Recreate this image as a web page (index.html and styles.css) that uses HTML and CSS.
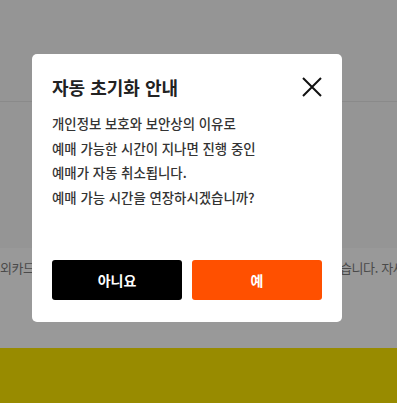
FILE: index.html
```html
<!DOCTYPE html>
<html lang="ko">
<head>
    <meta charset="UTF-8">
    <meta name="viewport" content="width=device-width, initial-scale=1.0">
    <title>자동 초기화 안내</title>
    <link rel="stylesheet" href="styles.css">
</head>
<body>
    <div class="page">
        <header class="top-bar"></header>
        <section class="content"></section>
        <div class="notice">
            <span class="notice-left">외카드</span>
            <span class="notice-right">습니다. 자세히</span>
        </div>
        <footer class="bottom-bar"></footer>
    </div>

    <div class="modal">
        <div class="modal-head">
            <h2 class="modal-title">자동 초기화 안내</h2>
            <button class="close-btn" aria-label="닫기">
                <svg width="20" height="20" viewBox="0 0 20 20">
                    <path d="M1 1 L19 19 M19 1 L1 19" stroke="#111" stroke-width="2" fill="none"/>
                </svg>
            </button>
        </div>
        <p class="modal-text">
            개인정보 보호와 보안상의 이유로<br>
            예매 가능한 시간이 지나면 진행 중인<br>
            예매가 자동 취소됩니다.<br>
            예매 가능 시간을 연장하시겠습니까?
        </p>
        <div class="modal-actions">
            <button class="btn btn-no">아니요</button>
            <button class="btn btn-yes">예</button>
        </div>
    </div>
</body>
</html>
```

FILE: styles.css
```css
* {
    margin: 0;
    padding: 0;
    box-sizing: border-box;
}

body {
    font-family: 'Noto Sans CJK KR', 'Noto Sans', sans-serif;
    background: #959595;
    overflow: hidden;
}

.page {
    display: flex;
    flex-direction: column;
    height: 403px;
}

.top-bar {
    height: 102px;
    border-bottom: 1px solid #8a8a8a;
}

.content {
    height: 146px;
}

.notice {
    display: flex;
    height: 100px;
    padding-top: 10px;
    background: #999;
    font-size: 13px;
    color: #4a4a4a;
    white-space: nowrap;
    overflow: hidden;
    letter-spacing: -0.4px;
}

.notice-left {
    flex: 0 0 340px;
}

.notice-right {
    flex: 0 0 auto;
}

.bottom-bar {
    flex: 1;
    background: #988b00;
}

.modal {
    position: absolute;
    left: 32px;
    top: 54px;
    width: 310px;
    height: 268px;
    background: #fff;
    border-radius: 5px;
    padding: 21px 20px 20px 20px;
}

.modal-head {
    display: flex;
    justify-content: space-between;
    align-items: center;
    height: 24px;
}

.modal-title {
    font-size: 18px;
    font-weight: 700;
    color: #222;
}

.close-btn {
    background: none;
    border: none;
    width: 20px;
    height: 20px;
    cursor: pointer;
}

.close-btn svg {
    display: block;
}

.modal-text {
    margin-top: 12px;
    font-size: 13.4px;
    line-height: 24.5px;
    color: #333;
    font-weight: 500;
}

.modal-actions {
    display: flex;
    gap: 10px;
    margin-top: 51px;
}

.btn {
    flex: 1;
    height: 40px;
    border: none;
    border-radius: 3px;
    color: #fff;
    font-family: inherit;
    font-size: 14px;
    font-weight: 700;
    cursor: pointer;
}

.btn-no {
    background: #000;
}

.btn-yes {
    background: #ff5000;
}
```
